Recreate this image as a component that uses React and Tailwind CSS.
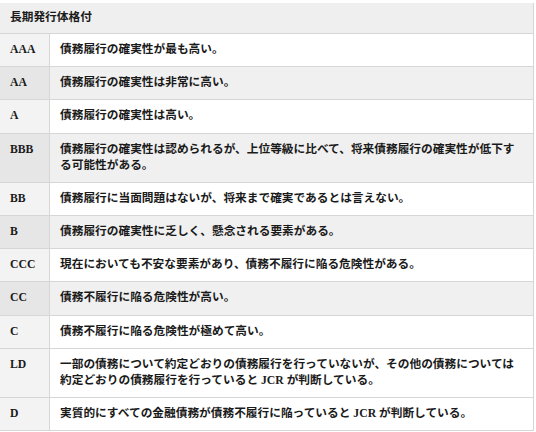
import React from "react";

const rows = [
  ["AAA", ["債務履行の確実性が最も高い。"]],
  ["AA", ["債務履行の確実性は非常に高い。"]],
  ["A", ["債務履行の確実性は高い。"]],
  ["BBB", ["債務履行の確実性は認められるが、上位等級に比べて、将来債務履行の確実性が低下す", "る可能性がある。"]],
  ["BB", ["債務履行に当面問題はないが、将来まで確実であるとは言えない。"]],
  ["B", ["債務履行の確実性に乏しく、懸念される要素がある。"]],
  ["CCC", ["現在においても不安な要素があり、債務不履行に陥る危険性がある。"]],
  ["CC", ["債務不履行に陥る危険性が高い。"]],
  ["C", ["債務不履行に陥る危険性が極めて高い。"]],
  ["LD", ["一部の債務について約定どおりの債務履行を行っていないが、その他の債務については", "約定どおりの債務履行を行っていると JCR が判断している。"]],
  ["D", ["実質的にすべての金融債務が債務不履行に陥っていると JCR が判断している。"]],
];

export default function App() {
  return (
    <div
      className="w-[536px] h-[432px] overflow-hidden bg-white pt-[3px] text-[#1a1a1a] text-[11.7px] leading-[16px] font-bold"
      style={{ fontFamily: '"Liberation Serif", "Noto Sans CJK JP", serif' }}
    >
      <div className="w-[534px] border-r border-[#d6d6d6]">
        <div className="h-[31px] flex items-center pl-[10px] bg-[#efefef] border-b border-[#d6d6d6]">
          長期発行体格付
        </div>
        {rows.map(([label, lines], i) => {
          const gray = i % 2 === 1 && i < 9;
          return (
            <div key={label} className="flex border-b border-[#d6d6d6]">
              <div
                className={`w-[50px] shrink-0 pl-[10px] py-[8.1px] border-r border-[#d6d6d6] ${gray ? "bg-[#e6e6e6]" : "bg-[#f3f3f3]"}`}
              >
                {label}
              </div>
              <div className={`flex-1 pl-[10px] py-[8.1px] ${gray ? "bg-[#f0f0f0]" : "bg-white"}`}>
                {lines.map((l, j) => (
                  <div key={j} className="whitespace-nowrap">{l}</div>
                ))}
              </div>
            </div>
          );
        })}
      </div>
    </div>
  );
}
